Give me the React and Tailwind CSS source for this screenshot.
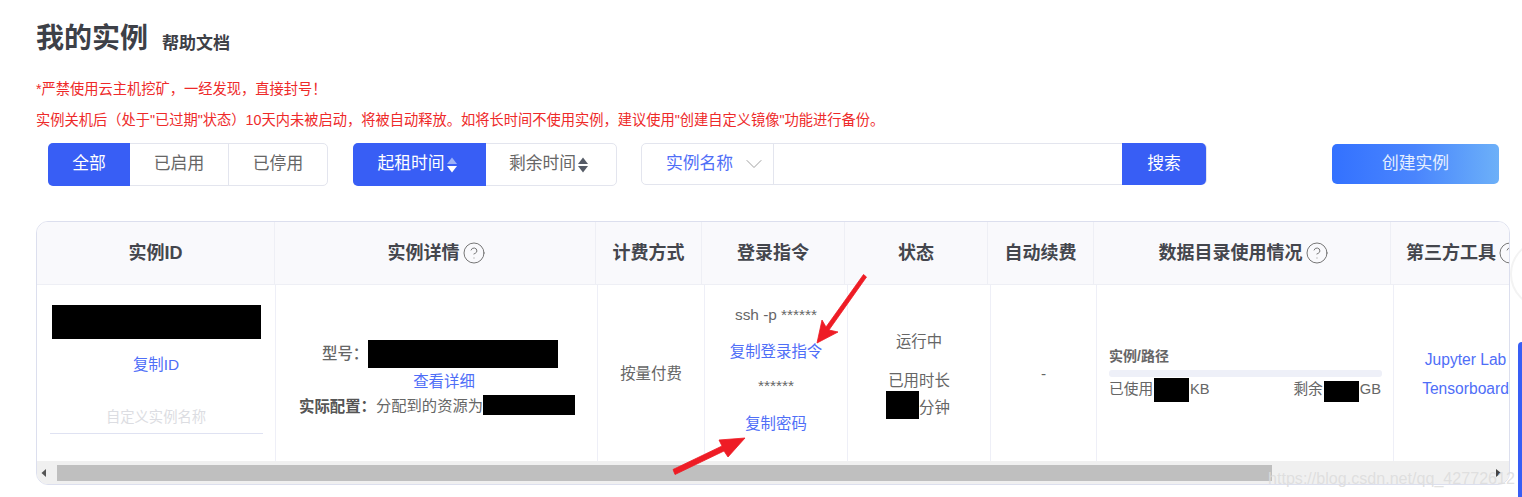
import React from "react";
import { ChevronDown, CircleHelp } from "lucide-react";

function Sort({ active }) {
  return (
    <svg width="12" height="18" viewBox="0 0 12 18" className="shrink-0">
      <path d="M6 1.5L11 8H1z" fill={active ? "#9db2f8" : "#555b66"} />
      <path d="M6 16.5L1 10h10z" fill={active ? "#ffffff" : "#555b66"} />
    </svg>
  );
}

function Black({ className }) {
  return <span className={"block bg-black shrink-0 " + className}></span>;
}

function Head({ w, children, help, last }) {
  return (
    <div className={"h-full flex items-center justify-center gap-[2px] shrink-0 whitespace-nowrap border-[#eeeff5] " + w + (last ? "" : " border-r") + (help ? " pl-[3px]" : "")}>
      <span>{children}</span>
      {help && <CircleHelp size={24} strokeWidth={0.9} className="text-[#666] shrink-0" />}
    </div>
  );
}

function Cell({ w, className = "", children, last }) {
  return (
    <div className={"h-full flex flex-col items-center justify-center shrink-0 border-[#eeeff7] " + w + (last ? "" : " border-r ") + " " + className}>
      {children}
    </div>
  );
}

const Link = ({ children, className = "" }) => (
  <span className={"text-[#4f6ef7] whitespace-nowrap " + className}>{children}</span>
);

export default function App() {
  return (
    <div className="relative w-[1522px] h-[497px] overflow-hidden bg-white font-['Liberation_Sans','Noto_Sans_CJK_SC',sans-serif] text-[15.4px] text-[#666]">
      <div className="pl-9 pt-[20px]">
        <div className="flex items-end h-[38px] gap-[14px] text-[#3d4047] font-bold">
          <span className="text-[28px] leading-[38px]">我的实例</span>
          <span className="text-[17px] leading-[24px] mb-[2px]">帮助文档</span>
        </div>
        <p className="mt-[21px] text-[14.25px] leading-[20px] text-[#ee2a2a]">*严禁使用云主机挖矿，一经发现，直接封号！</p>
        <p className="mt-[11px] text-[14.25px] leading-[20px] text-[#ee2a2a]">实例关机后（处于"已过期"状态）10天内未被启动，将被自动释放。如将长时间不使用实例，建议使用"创建自定义镜像"功能进行备份。</p>

        {/* filters */}
        <div className="flex items-start mt-[13px] pl-3 text-[16.8px]">
          <div className="flex w-[280px] h-[43px] rounded-[5px] border border-[#e3e5ee]">
            <div className="w-[82px] -ml-px -my-px rounded-l-[5px] bg-[#385ef5] text-white flex items-center justify-center pb-[1px]">全部</div>
            <div className="w-[99px] border-r border-[#e3e5ee] flex items-center justify-center pb-[1px]">已启用</div>
            <div className="flex-1 flex items-center justify-center pb-[1px]">已停用</div>
          </div>
          <div className="flex w-[264px] h-[43px] ml-[25px] rounded-[5px] border border-[#e3e5ee]">
            <div className="w-[133px] -ml-px -my-px rounded-l-[5px] bg-[#385ef5] text-white flex items-center justify-center gap-[1px] pr-[4px]"><span className="pb-[1px]">起租时间</span><Sort active /></div>
            <div className="flex-1 flex items-center justify-center gap-[1px] pr-[4px]"><span className="pb-[1px]">剩余时间</span><Sort /></div>
          </div>
          <div className="flex w-[566px] h-[42px] ml-[24px] rounded-[5px] border border-[#e3e5ee]">
            <div className="w-[132px] border-r border-[#e3e5ee] flex items-center pl-[24px] gap-[7px] text-[#4f6ef7]">
              <span className="pb-[1px]">实例名称</span><ChevronDown size={28} strokeWidth={0.8} className="text-[#999]" />
            </div>
            <div className="flex-1"></div>
            <div className="w-[84px] -my-px rounded-r-[5px] bg-[#385ef5] text-white flex items-center justify-center pb-[1px]">搜索</div>
          </div>
          <div className="w-[167px] h-[40px] ml-[125px] mt-px rounded-[5px] bg-gradient-to-r from-[#3371ff] via-[#4a85fd] to-[#6db0f8] text-[#e6efff] flex items-center justify-center pb-[1px]">创建实例</div>
        </div>

        {/* table */}
        <div className="mt-[35px] w-[1474px] h-[264px] rounded-[12px] border border-[#dcdfee] overflow-hidden flex flex-col">
          <div className="flex h-[63px] shrink-0 bg-[#f9f9fc] border-b border-[#eeeff5] text-[18px] font-bold text-[#44464d]">
            <Head w="w-[238px]">实例ID</Head>
            <Head w="w-[321px]" help>实例详情</Head>
            <Head w="w-[106px]">计费方式</Head>
            <Head w="w-[143px]">登录指令</Head>
            <Head w="w-[143px]">状态</Head>
            <Head w="w-[106px]">自动续费</Head>
            <Head w="w-[297px]" help>数据目录使用情况</Head>
            <Head w="w-[143px]" help last>第三方工具</Head>
          </div>
          <div className="flex h-[176px] shrink-0 overflow-hidden">
            <Cell w="w-[239px]" className="justify-start px-[12px]">
              <Black className="w-[209px] h-[34px] mt-[20px]" />
              <Link className="mt-[15px] leading-[22px]">复制ID</Link>
              <div className="mt-[27px] w-[213px] h-[31px] border-b border-[#dfe2f2] flex items-center justify-center text-[14.3px] text-[#dcdde2]">自定义实例名称</div>
            </Cell>
            <Cell w="w-[322px]" className="justify-start">
              <div className="flex items-center w-full pl-[46px] h-[28px] mt-[55px]">
                <span className="font-medium">型号：</span>
                <Black className="w-[190px] h-[28px]" />
              </div>
              <Link className="leading-[27px] ml-[15px]">查看详细</Link>
              <div className="flex items-center w-full pl-[23px] h-[20px]">
                <span className="font-bold text-[#555] pt-[3px]">实际配置：</span>
                <span className="whitespace-nowrap pt-[3px] text-[15.3px]">分配到的资源为</span>
                <Black className="w-[92px] h-[20px]" />
              </div>
            </Cell>
            <Cell w="w-[107px]" className="pt-[2px]">按量付费</Cell>
            <Cell w="w-[143px]" className="justify-start">
              <span className="mt-[20px] leading-[20px] whitespace-nowrap">ssh -p ******</span>
              <Link className="mt-[17px] leading-[20px]">复制登录指令</Link>
              <span className="mt-[14px] leading-[20px]">******</span>
              <Link className="mt-[18px] leading-[20px]">复制密码</Link>
            </Cell>
            <Cell w="w-[143px]" className="justify-start">
              <span className="mt-[47px] leading-[20px]">运行中</span>
              <span className="mt-[19px] leading-[20px]">已用时长</span>
              <div className="flex items-center h-[28px] pr-[2px]">
                <Black className="w-[33px] h-[28px]" />
                <span className="pt-[5px]">分钟</span>
              </div>
            </Cell>
            <Cell w="w-[106px]" className="pt-[2px]">-</Cell>
            <Cell w="w-[297px]" className="items-stretch pl-[12px] pr-[12px] justify-start">
              <span className="text-[14px] font-bold leading-[18px] mt-[62px]">实例/路径</span>
              <div className="h-[7px] mt-[5px] -mr-px rounded-[3px] bg-[#eef0f8]"></div>
              <div className="flex items-start justify-between h-[24px] mt-[1px] text-[14.7px] leading-[22px]">
                <div className="flex items-start">已使用<Black className="w-[35px] h-[24px] mx-[1px]" />KB</div>
                <div className="flex items-start">剩余<Black className="w-[35px] h-[21px] mt-[3px] mx-[1px]" />GB</div>
              </div>
            </Cell>
            <Cell w="w-[143px]" last>
              <Link className="text-[15.6px] leading-[29px] mt-[1px]">Jupyter Lab</Link>
              <Link className="text-[15.6px] leading-[29px]">Tensorboard</Link>
            </Cell>
          </div>
          {/* scrollbar */}
          <div className="flex-1 bg-[#f0f0f0] flex items-center">
            <svg width="20" height="20" viewBox="0 0 20 20" className="shrink-0"><path d="M9 6v8L4.500 10z" fill="#555" /></svg>
            <div className="w-[1215px] h-[16px] bg-[#bfbfbf]"></div>
            <div className="flex-1"></div>
            <svg width="20" height="20" viewBox="0 0 20 20" className="shrink-0"><path d="M7 6v8l5-4z" fill="#444" /></svg>
          </div>
        </div>
      </div>

      {/* annotation arrows */}
      <svg className="absolute left-0 top-0 pointer-events-none" width="1522" height="497" viewBox="0 0 1522 497">
        <path d="M863.500 274.500L866.500 277L829 330L838 332L817 343L822 320L826 327z" fill="#ee1c25" stroke="#ee1c25" strokeWidth="0.8" strokeLinejoin="round" />
        <path d="M673 469.500L675 474.500L724 451L728 457L745 438L719 440L722 446z" fill="#ee1c25" stroke="#ee1c25" strokeWidth="0.8" strokeLinejoin="round" />
      </svg>

      {/* overlays at the window edge */}
      <div className="absolute left-[1510px] top-[240px] w-[70px] h-[68px] rounded-full bg-white border-2 border-[#f3f3f3]"></div>
      <div className="absolute left-[1518px] top-[342px] w-[4px] h-[155px] rounded-tl-[4px] bg-[#385ef5]"></div>

      {/* watermark */}
      <span className="absolute left-[1268px] top-[466px] text-[16.100px] leading-[24px] whitespace-nowrap text-[#dddddd]/90">https://blog.csdn.net/qq_42772612</span>
    </div>
  );
}
